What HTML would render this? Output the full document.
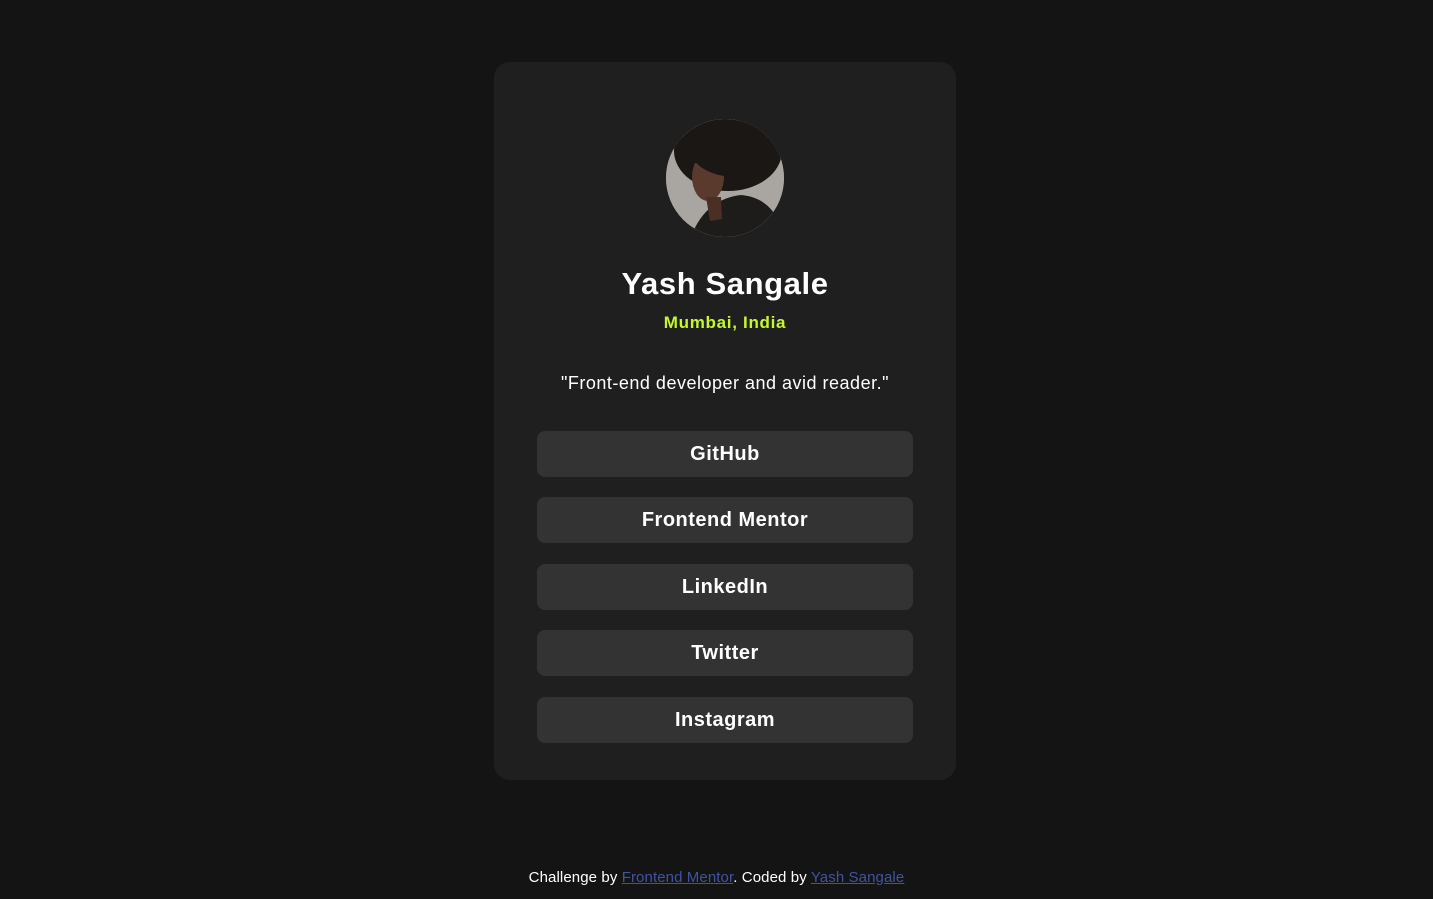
<!DOCTYPE html>
<html><head><meta charset="utf-8"><style>
*{margin:0;padding:0;box-sizing:border-box}
body{width:1433px;height:899px;background:#141414;font-family:"Liberation Sans",sans-serif;color:#fff;position:relative;overflow:hidden}
.card{position:absolute;left:494px;top:62px;width:462px;height:718px;background:#1f1f1f;border-radius:16px}
.av{position:absolute;left:172px;top:57px;width:118px;height:118px;border-radius:50%;overflow:hidden;background:#9c9894}
h1{position:absolute;left:0;right:0;top:204px;text-align:center;font-size:31px;font-weight:bold;letter-spacing:0.6px}
.loc{position:absolute;left:0;right:0;top:251px;text-align:center;font-size:17px;font-weight:bold;color:#c4f82a;letter-spacing:0.7px}
.q{position:absolute;left:0;right:0;top:311px;text-align:center;font-size:18px;letter-spacing:0.5px}
.b{position:absolute;left:43px;width:376px;height:46px;background:#333;border-radius:8px;text-align:center;line-height:47px;font-size:20px;font-weight:bold;letter-spacing:0.5px}
.f{position:absolute;left:0;right:0;top:869px;text-align:center;font-size:15px;letter-spacing:0.1px}
.f a{color:#3e54a3;text-decoration:underline}
</style></head><body>
<div class="card">
<div class="av"><svg width="118" height="118" viewBox="0 0 118 118">
<rect width="118" height="118" fill="#a9a6a2"/>
<ellipse cx="62" cy="32" rx="54" ry="40" fill="#1b1715"/>
<path d="M25 118 C35 90 55 78 75 76 C98 78 112 92 118 118Z" fill="#1e1c1b"/>
<ellipse cx="42" cy="58" rx="16" ry="24" fill="#5a3a2c"/>
<path d="M40 78 L55 78 L56 100 L44 102Z" fill="#4a2f24"/>
<ellipse cx="70" cy="30" rx="46" ry="28" fill="#1b1715"/>
<ellipse cx="30" cy="30" rx="22" ry="14" fill="#1b1715"/>
</svg></div>
<h1>Yash Sangale</h1>
<div class="loc">Mumbai, India</div>
<div class="q">"Front-end developer and avid reader."</div>
<div class="b" style="top:369px">GitHub</div>
<div class="b" style="top:435px">Frontend Mentor</div>
<div class="b" style="top:502px">LinkedIn</div>
<div class="b" style="top:568px">Twitter</div>
<div class="b" style="top:635px">Instagram</div>
</div>
<div class="f">Challenge by <a>Frontend Mentor</a>. Coded by <a>Yash Sangale</a></div>
</body></html>
